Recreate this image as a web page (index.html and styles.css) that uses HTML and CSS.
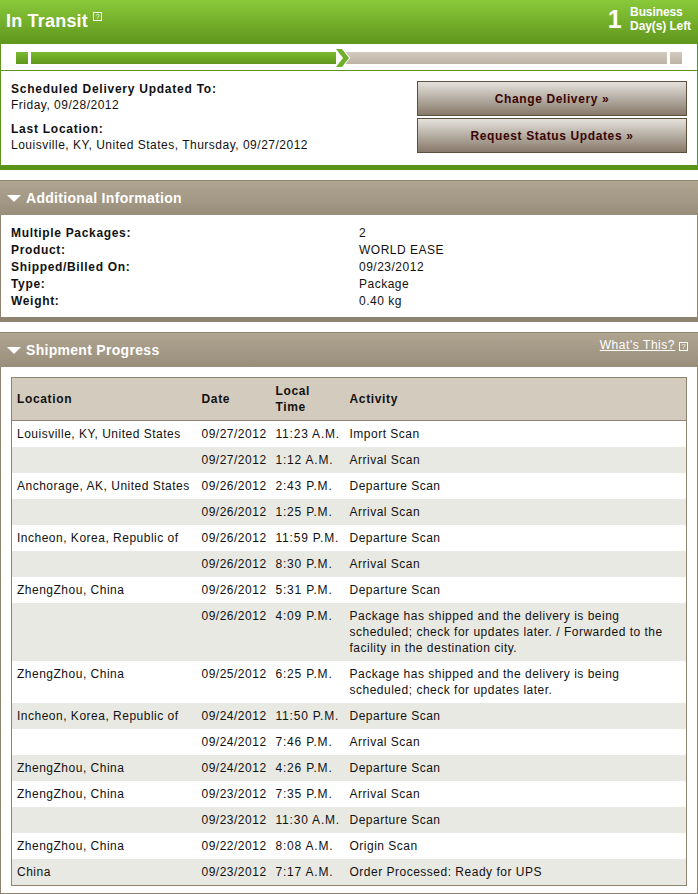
FILE: index.html
```html
<!DOCTYPE HTML>
<html lang="en">

<head>
    <title>Tracking Detail</title>
    <meta charset="utf-8">
    <link rel="stylesheet" href="styles.css">
</head>

<body>
    <div class="panel panel-green">
        <div class="status-head">
            <h1 class="status-title">In Transit <span class="help help-top">?</span></h1>
            <div class="days-left">
                <span class="days-num">1</span>
                <span class="days-text">Business<br>Day(s) Left</span>
            </div>
        </div>
        <div class="progress">
            <span class="seg seg-done seg-small"></span>
            <span class="seg seg-done seg-long"></span>
            <svg class="chevron" width="16" height="20" viewBox="0 0 16 20">
                <path d="M1 1h6l7 9-7 9H1l7-9z" fill="#6fb02a" stroke="#fff" stroke-width="2" paint-order="stroke"/>
            </svg>
            <span class="seg seg-todo seg-rest"></span>
            <span class="seg seg-todo seg-small-end"></span>
        </div>
        <div class="summary">
            <div class="summary-text">
                <p class="summary-item"><b>Scheduled Delivery Updated To:</b><br>Friday, 09/28/2012</p>
                <p class="summary-item"><b>Last Location:</b><br>Louisville, KY, United States, Thursday, 09/27/2012</p>
            </div>
            <div class="summary-actions">
                <button type="button" class="button">Change Delivery »</button>
                <button type="button" class="button">Request Status Updates »</button>
            </div>
        </div>
    </div>

    <div class="panel panel-tan">
        <div class="section-head">
            <h2 class="section-title"><span class="caret"></span>Additional Information</h2>
        </div>
        <div class="details">
            <b>Multiple Packages:</b><span>2</span>
            <b>Product:</b><span>WORLD EASE</span>
            <b>Shipped/Billed On:</b><span>09/23/2012</span>
            <b>Type:</b><span>Package</span>
            <b>Weight:</b><span>0.40 kg</span>
        </div>
    </div>

    <div class="panel panel-tan panel-last">
        <div class="section-head">
            <h2 class="section-title"><span class="caret"></span>Shipment Progress</h2>
            <a class="whats-this" href="#"><u>What's This?</u> <span class="help">?</span></a>
        </div>
        <div class="table-wrap">
            <table class="progress-table">
                <thead>
                    <tr>
                        <th class="col-loc">Location</th>
                        <th class="col-date">Date</th>
                        <th class="col-time">Local<br>Time</th>
                        <th>Activity</th>
                    </tr>
                </thead>
                <tbody>
                    <tr><td>Louisville, KY, United States</td><td>09/27/2012</td><td>11:23 A.M.</td><td>Import Scan</td></tr>
                    <tr><td></td><td>09/27/2012</td><td>1:12 A.M.</td><td>Arrival Scan</td></tr>
                    <tr><td>Anchorage, AK, United States</td><td>09/26/2012</td><td>2:43 P.M.</td><td>Departure Scan</td></tr>
                    <tr><td></td><td>09/26/2012</td><td>1:25 P.M.</td><td>Arrival Scan</td></tr>
                    <tr><td>Incheon, Korea, Republic of</td><td>09/26/2012</td><td>11:59 P.M.</td><td>Departure Scan</td></tr>
                    <tr><td></td><td>09/26/2012</td><td>8:30 P.M.</td><td>Arrival Scan</td></tr>
                    <tr><td>ZhengZhou, China</td><td>09/26/2012</td><td>5:31 P.M.</td><td>Departure Scan</td></tr>
                    <tr><td></td><td>09/26/2012</td><td>4:09 P.M.</td><td>Package has shipped and the delivery is being<br>scheduled; check for updates later. / Forwarded to the<br>facility in the destination city.</td></tr>
                    <tr><td>ZhengZhou, China</td><td>09/25/2012</td><td>6:25 P.M.</td><td>Package has shipped and the delivery is being<br>scheduled; check for updates later.</td></tr>
                    <tr><td>Incheon, Korea, Republic of</td><td>09/24/2012</td><td>11:50 P.M.</td><td>Departure Scan</td></tr>
                    <tr><td></td><td>09/24/2012</td><td>7:46 P.M.</td><td>Arrival Scan</td></tr>
                    <tr><td>ZhengZhou, China</td><td>09/24/2012</td><td>4:26 P.M.</td><td>Departure Scan</td></tr>
                    <tr><td>ZhengZhou, China</td><td>09/23/2012</td><td>7:35 P.M.</td><td>Arrival Scan</td></tr>
                    <tr><td></td><td>09/23/2012</td><td>11:30 A.M.</td><td>Departure Scan</td></tr>
                    <tr><td>ZhengZhou, China</td><td>09/22/2012</td><td>8:08 A.M.</td><td>Origin Scan</td></tr>
                    <tr><td>China</td><td>09/23/2012</td><td>7:17 A.M.</td><td>Order Processed: Ready for UPS</td></tr>
                </tbody>
            </table>
        </div>
    </div>
</body>

</html>
```
FILE: styles.css
```css
html, body {
    margin: 0;
    padding: 0;
}

body {
    width: 698px;
    font-family: "Liberation Sans", Arial, sans-serif;
    font-size: 12px;
    line-height: 16px;
    letter-spacing: 0.5px;
    color: #111;
    background: #fff;
}

.panel {
    box-sizing: border-box;
    width: 698px;
    margin-bottom: 10px;
    border-left: 1px solid #5f941c;
    border-right: 1px solid #5f941c;
}

.panel-green {
    border-bottom: 5px solid #5b9316;
}

.panel-tan {
    border-left-color: #8e8370;
    border-right-color: #8e8370;
    border-bottom: 5px solid #8e8370;
}

.panel-last {
    margin-bottom: 0;
    border-bottom: 1px solid #8e8370;
    padding-bottom: 7px;
}

/* status header */
.status-head {
    display: flex;
    justify-content: space-between;
    align-items: center;
    height: 44px;
    margin: 0 -1px;
    padding: 0 7px 0 6px;
    background: linear-gradient(#8ac93a, #5f961c);
    color: #fff;
}

.status-title {
    margin: 0 0 2px;
    font-size: 18px;
    line-height: 22px;
    font-weight: bold;
    letter-spacing: 0.2px;
}

.help {
    display: inline-block;
    box-sizing: border-box;
    width: 9px;
    height: 9px;
    border: 1px solid currentColor;
    font-size: 7px;
    line-height: 7px;
    font-weight: normal;
    letter-spacing: 0;
    text-align: center;
    text-decoration: none;
}

.help-top {
    vertical-align: 8px;
}

.days-left {
    display: flex;
    align-items: center;
    gap: 8px;
    margin-bottom: 7px;
}

.days-num {
    font-size: 25px;
    line-height: 30px;
    font-weight: bold;
}

.days-text {
    font-size: 12px;
    line-height: 14px;
    font-weight: bold;
    letter-spacing: -0.1px;
}

/* progress bar */
.progress {
    display: flex;
    align-items: center;
    height: 27px;
    box-sizing: border-box;
    padding: 8px 0 6px 15px;
    border-bottom: 1px solid #5f941c;
}

.seg {
    display: block;
    height: 12px;
}

.seg-done {
    background: linear-gradient(#7cbb30, #5f961c);
}

.seg-todo {
    background: linear-gradient(#d3cbc0, #bdb3a5);
}

.seg-small {
    width: 12px;
    margin-right: 3px;
}

.seg-long {
    width: 305px;
}

.chevron {
    flex: none;
    margin: 0 -7px 0 -1px;
    position: relative;
    z-index: 1;
}

.seg-rest {
    width: 323px;
    margin-right: 3px;
}

.seg-small-end {
    width: 12px;
}

/* summary */
.summary {
    display: flex;
    justify-content: space-between;
    height: 94px;
    box-sizing: border-box;
    padding: 10px 10px 0;
}

.summary-item {
    margin: 0 0 8px;
}

.summary-item b {
    letter-spacing: 0.75px;
}

.summary-actions {
    display: flex;
    flex-direction: column;
    gap: 2px;
}

.button {
    box-sizing: border-box;
    display: block;
    width: 270px;
    height: 35px;
    padding: 0;
    border: 1px solid #5c4f3d;
    background: linear-gradient(#e4e2dc, #87796a);
    color: #3a0505;
    font-family: inherit;
    font-size: 12px;
    font-weight: bold;
    letter-spacing: 0.62px;
}

/* tan sections */
.section-head {
    display: flex;
    justify-content: space-between;
    height: 35px;
    box-sizing: border-box;
    margin: 0 -1px;
    padding: 0 10px 0 7px;
    border-top: 1px solid #8e8370;
    background: linear-gradient(#b0a591, #998e7b);
    color: #fff;
}

.section-title {
    display: flex;
    align-items: center;
    gap: 5px;
    margin: 0;
    font-size: 14px;
    font-weight: bold;
    letter-spacing: 0.3px;
}

.caret {
    width: 0;
    height: 0;
    border-left: 7px solid transparent;
    border-right: 7px solid transparent;
    border-top: 7px solid #fff;
}

.whats-this {
    margin-top: 4px;
    color: #fff;
    text-decoration: none;
    font-size: 12px;
    letter-spacing: 0.55px;
}

.details {
    display: grid;
    grid-template-columns: 348px 1fr;
    align-content: start;
    height: 102px;
    box-sizing: border-box;
    padding: 10px 10px 0;
    line-height: 17px;
}

.details b {
    letter-spacing: 0.67px;
}

/* progress table */
.table-wrap {
    padding: 10px 10px 0;
}

.progress-table {
    width: 676px;
    border-collapse: collapse;
    table-layout: fixed;
    border: 1px solid #8e8370;
}

.progress-table th {
    height: 43px;
    padding: 0 5px;
    box-sizing: border-box;
    border-bottom: 1px solid #8e8370;
    background: #d3cbbe;
    text-align: left;
    font-weight: bold;
    letter-spacing: 0.65px;
}

.progress-table td {
    padding: 5px 5px;
    vertical-align: top;
    white-space: nowrap;
}

.progress-table td:nth-child(3) {
    letter-spacing: 0.8px;
}

.col-loc {
    width: 185px;
}

.col-date {
    width: 74px;
}

.col-time {
    width: 74px;
}

.progress-table tbody tr:nth-child(even) {
    background: #e9e9e3;
}
```
